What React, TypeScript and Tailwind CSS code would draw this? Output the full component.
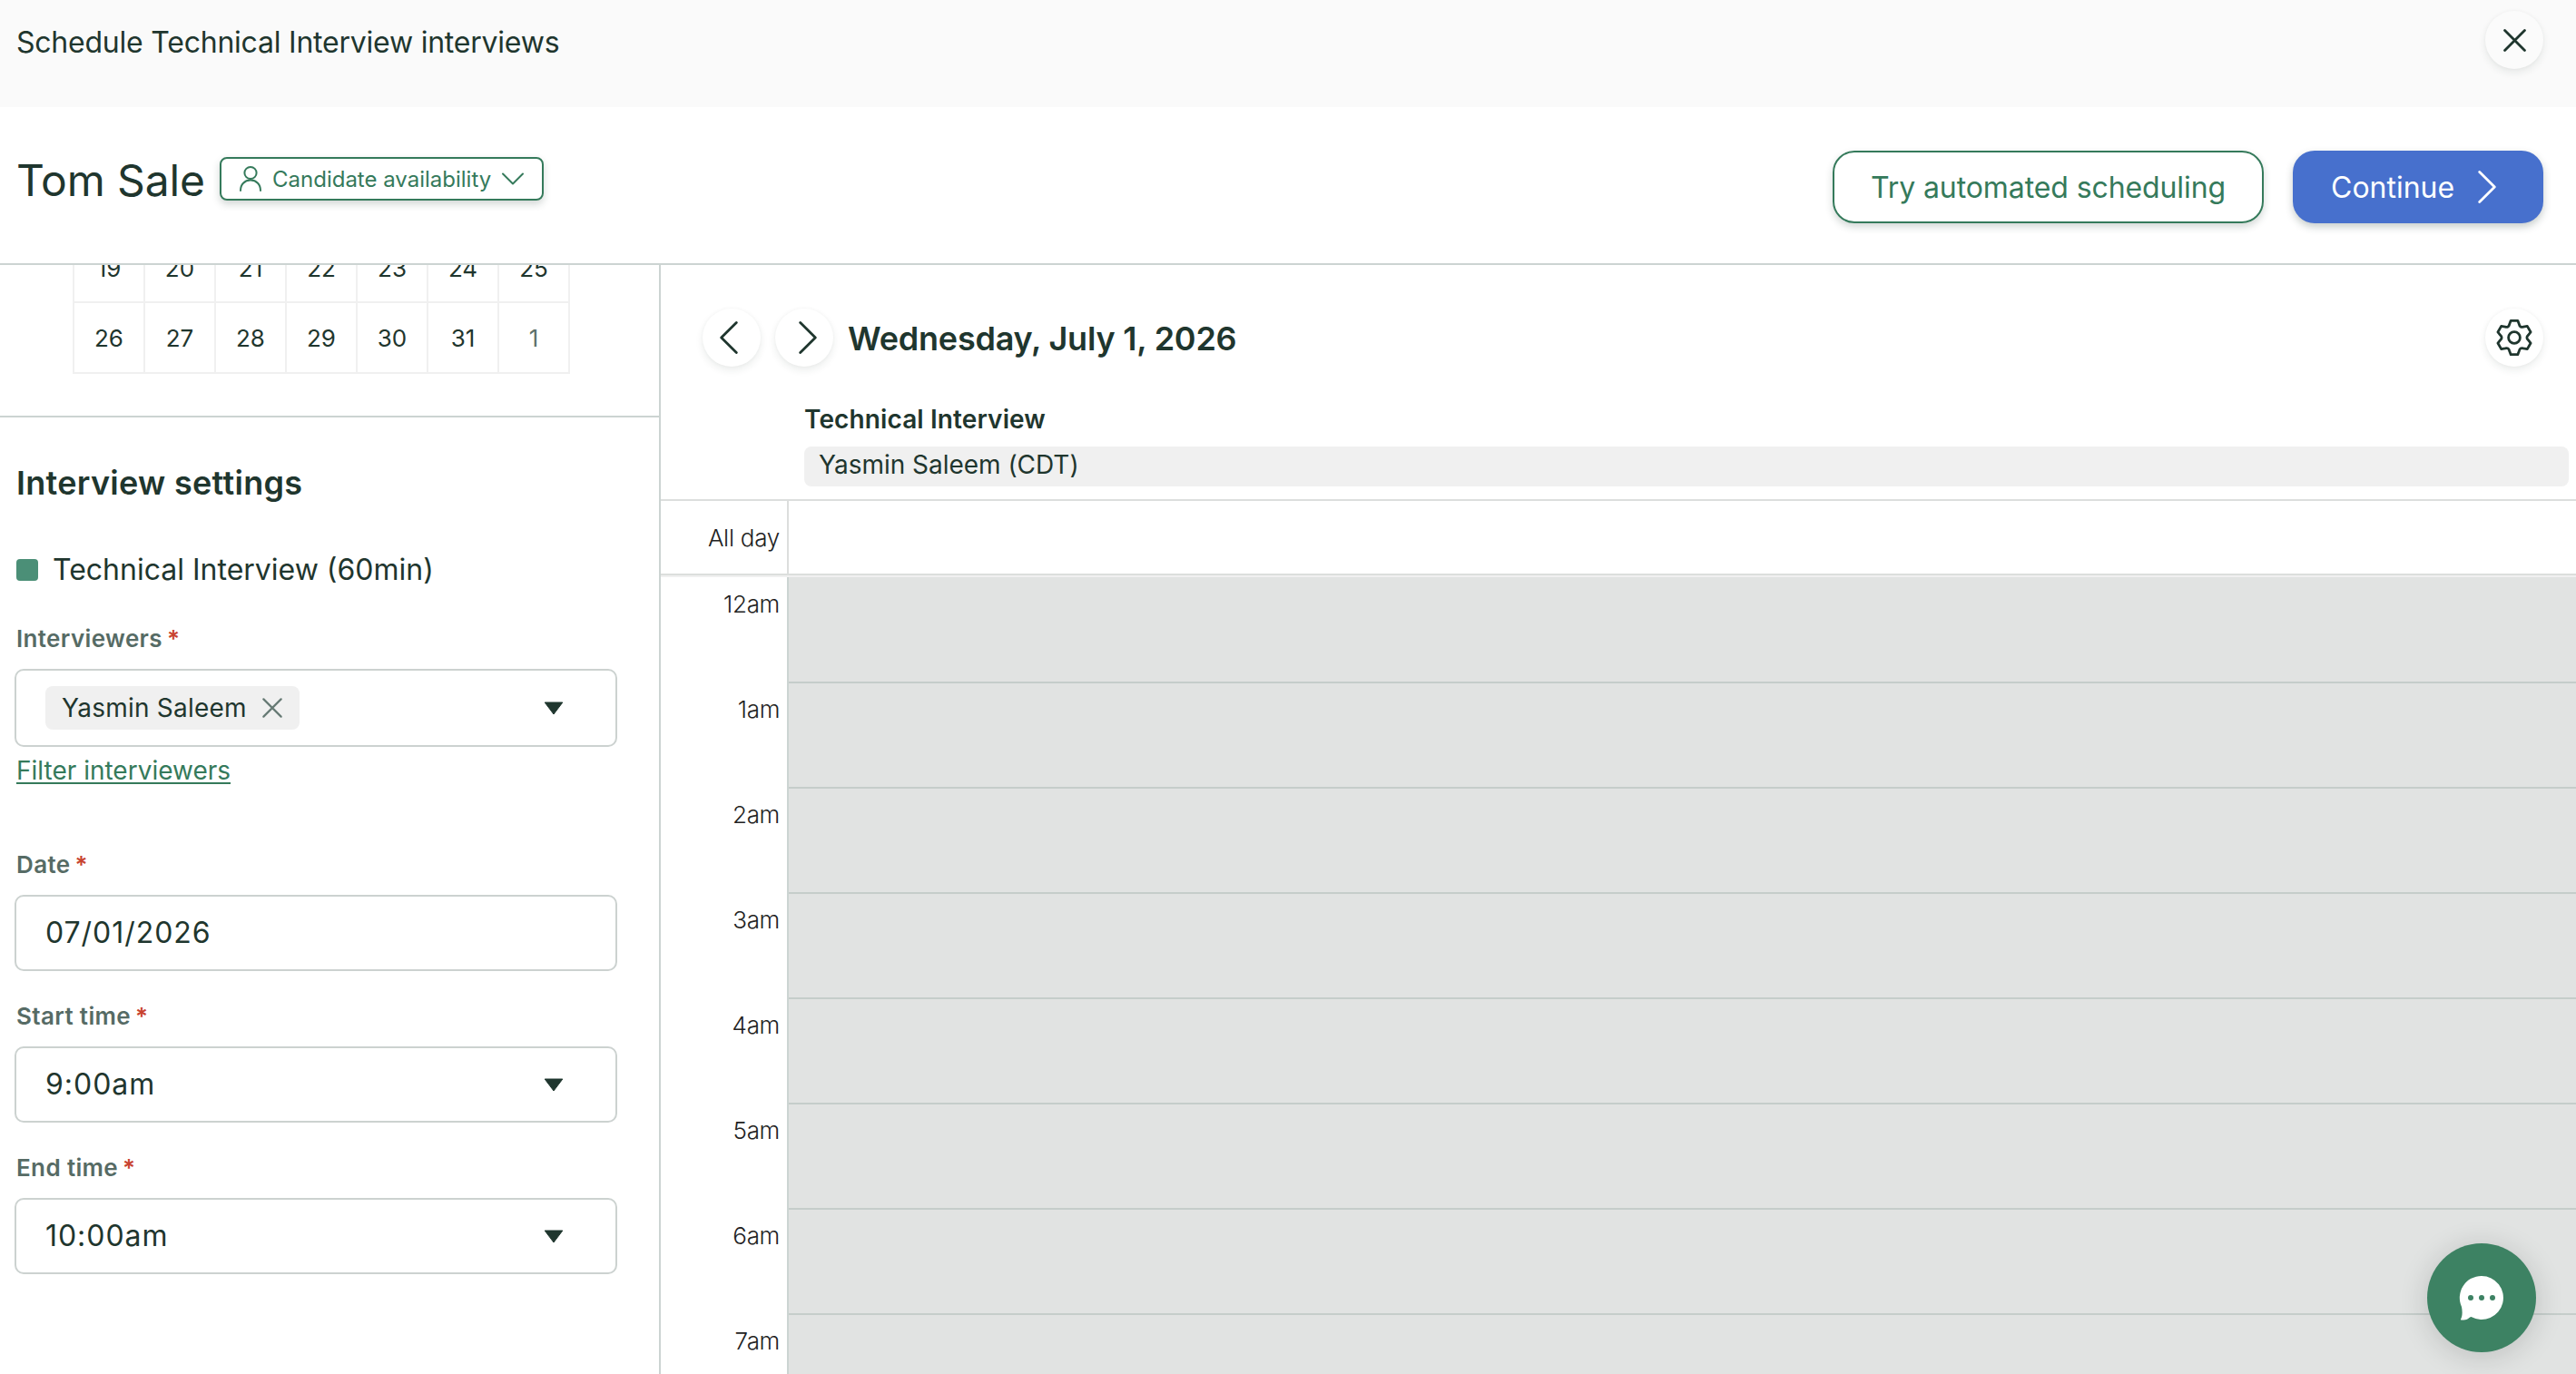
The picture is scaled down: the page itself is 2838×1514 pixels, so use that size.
import type { ReactNode } from "react";

const weeks = [
  [19, 20, 21, 22, 23, 24, 25],
  [26, 27, 28, 29, 30, 31, 1],
];

const hours = ["12am", "1am", "2am", "3am", "4am", "5am", "6am", "7am"];

// six-tooth outline around the origin
function gearPath() {
  const at = (deg: number, r: number) => {
    const a = (deg * Math.PI) / 180;
    return `${(r * Math.sin(a)).toFixed(2)} ${(-r * Math.cos(a)).toFixed(2)}`;
  };
  let d = "";
  for (let k = 0; k < 6; k++) {
    const t = k * 60;
    d += `${k === 0 ? "M" : "L"}${at(t - 11.5, 19.1)} L${at(t + 11.5, 19.1)} L${at(t + 20, 15.6)} Q${at(t + 30, 12.4)} ${at(t + 40, 15.6)} `;
  }
  return d + "Z";
}

function GearIcon() {
  return (
    <svg width="44" height="44" viewBox="-22 -22 44 44" fill="none" stroke="currentColor" strokeWidth="2.8" strokeLinejoin="round">
      <path d={gearPath()} />
      <circle r="6.4" />
    </svg>
  );
}

function PersonIcon() {
  return (
    <svg width="26" height="30" viewBox="0 0 26 30" fill="none" stroke="currentColor" strokeWidth="2" strokeLinecap="round">
      <circle cx="13" cy="8.5" r="6.6" />
      <path d="M2 28C2 21 6.5 16.6 13 16.6S24 21 24 28" />
    </svg>
  );
}

function CrossIcon({ size, stroke }: { size: number; stroke: number }) {
  return (
    <svg width={size} height={size} viewBox="0 0 24 24" fill="none" stroke="currentColor" strokeWidth={stroke} strokeLinecap="round">
      <path d="M1.5 1.5 22.5 22.5M22.5 1.5 1.5 22.5" />
    </svg>
  );
}

function ChevronIcon({ left = false }: { left?: boolean }) {
  return (
    <svg width="20" height="36" viewBox="0 0 20 36" fill="none" stroke="currentColor" strokeWidth="2.8" strokeLinecap="round" strokeLinejoin="round">
      <path d={left ? "M18.3 1.5 1.7 18 18.3 34.5" : "M1.7 1.5 18.3 18 1.7 34.5"} />
    </svg>
  );
}

function RoundButton({ label, className = "", children }: { label: string; className?: string; children: ReactNode }) {
  return (
    <button aria-label={label} className={`size-16 shrink-0 rounded-full flex items-center justify-center shadow-[0_4px_8px_rgba(31,54,46,0.09),0_0_4px_rgba(31,54,46,0.03)] ${className}`}>
      {children}
    </button>
  );
}

function Label({ children }: { children: ReactNode }) {
  return (
    <div className="pl-[18px] text-[26px] leading-9 font-semibold tracking-[0.014em] text-[#566b65]">
      {children} <span className="-ml-0.5 text-[#c8432f]">*</span>
    </div>
  );
}

function Field({ caret = false, className = "h-[84px]", children }: { caret?: boolean; className?: string; children: ReactNode }) {
  return (
    <div className={`ml-4 mt-[15px] w-[664px] rounded-[10px] border-2 border-[#ccd2d0] pl-8 pr-[57px] flex items-center justify-between text-[32px] ${className}`}>
      {children}
      {caret && (
        <svg width="22" height="15" viewBox="0 0 22 15" fill="currentColor" stroke="currentColor" strokeLinejoin="round">
          <path d="M1.2 1h19.6L11 14Z" />
        </svg>
      )}
    </div>
  );
}

function Sidebar() {
  return (
    <aside className="w-[728px] shrink-0 border-r-2 border-[#ccd4d2]">
      <div className="pl-20 pb-[46px] border-b-2 border-[#ccd4d2]">
        {weeks.map((week, i) => (
          <div key={i} className={`flex w-[548px] border-l-2 border-[#f0f0f0] overflow-hidden ${i === 0 ? "h-[42px]" : "h-[78px]"}`}>
            {week.map((day) => (
              <div
                key={day}
                className={`w-[78px] border-r-2 border-b-2 border-[#f0f0f0] flex justify-center text-[26px] ${day === 1 ? "text-[#5d716b]" : ""}`}
              >
                <span className={i === 0 ? "-mt-4 leading-10" : "leading-[77px]"}>{day}</span>
              </div>
            ))}
          </div>
        ))}
      </div>

      <h2 className="mt-12 pl-[18px] text-4xl leading-[48px] font-semibold tracking-[0.008em]">Interview settings</h2>

      <div className="mt-[52px] ml-[18px] flex items-center gap-4 text-[32px] leading-10">
        <span className="size-6 rounded bg-[#4b8f77]" />
        Technical Interview (60min)
      </div>

      <div className="mt-[38px]">
        <Label>Interviewers</Label>
        <Field caret className="h-[86px]">
          <span className="h-12 rounded-lg bg-[#f0f0f0] pl-[18px] pr-[19px] flex items-center gap-[17px] text-[28px] tracking-[0.008em]">
            Yasmin Saleem
            <span className="text-[#667a74]"><CrossIcon size={22} stroke={2.4} /></span>
          </span>
        </Field>
        <a className="mt-2 ml-[18px] inline-block text-[28px] leading-9 text-[#357a5b] underline decoration-2 underline-offset-[3px]">Filter interviewers</a>
      </div>

      <div className="mt-[68px]">
        <Label>Date</Label>
        <Field><span className="tracking-[0.03em]">07/01/2026</span></Field>
      </div>
      <div className="mt-8">
        <Label>Start time</Label>
        <Field caret><span className="tracking-[0.03em]">9:00am</span></Field>
      </div>
      <div className="mt-8">
        <Label>End time</Label>
        <Field caret><span className="tracking-[0.03em]">10:00am</span></Field>
      </div>
    </aside>
  );
}

function DayView() {
  return (
    <section className="flex-1 min-w-0 flex flex-col overflow-hidden">
      <div className="pt-12 pl-[46px] pr-9 flex items-center">
        <RoundButton label="Previous day" className="bg-white pr-[7px]"><ChevronIcon left /></RoundButton>
        <RoundButton label="Next day" className="ml-4 bg-white pl-[7px]"><ChevronIcon /></RoundButton>
        <h2 className="ml-4 flex-1 pt-0.5 text-4xl font-semibold tracking-[-0.006em]">Wednesday, July 1, 2026</h2>
        <RoundButton label="Settings" className="bg-white"><GearIcon /></RoundButton>
      </div>

      <div className="mt-10 pl-[158px] pr-2 pb-3.5 border-b-2 border-[#dcdedd]">
        <div className="text-[28px] leading-9 font-semibold tracking-[0.004em]">Technical Interview</div>
        <div className="mt-3 h-11 rounded-lg bg-[#f0f0f0] pl-4 text-[28px] leading-10 tracking-[-0.001em]">Yasmin Saleem (CDT)</div>
      </div>

      <div className="h-[82px] shrink-0 flex border-b-2 border-[#dcdedd] text-[#222]">
        <div className="w-[141px] border-r-2 border-[#dcdedd] pr-[8px] text-right text-[26px] leading-[81px] font-light tracking-[-0.01em]">All day</div>
      </div>
      <div className="h-0.5 shrink-0 bg-[#f0f0f0]" />

      <div className="flex-1 min-h-0 flex overflow-hidden">
        <div className="w-[141px] shrink-0 border-r-2 border-[#ccd4d2] pt-px">
          {hours.map((hour) => (
            <div key={hour} className="h-[116px] pt-[13px] pr-[8px] text-right text-[26px] leading-8 font-light tracking-[-0.012em] text-[#222]">{hour}</div>
          ))}
        </div>
        <div className="flex-1 bg-[#e1e3e2] pt-px">
          {hours.map((hour) => (
            <div key={hour} className="h-[116px] border-b-2 border-[#c5cdca]" />
          ))}
        </div>
      </div>
    </section>
  );
}

export default function App() {
  return (
    <div className="relative h-[1514px] w-[2838px] overflow-hidden flex flex-col bg-white text-[#1f362e] font-['Inter','Liberation_Sans',sans-serif]">
      <header className="h-[118px] shrink-0 bg-[#fafafa] pl-[18px] pr-9 pt-3 flex items-start justify-between">
        <h1 className="mt-[15px] text-[32px] leading-10 tracking-[-0.007em]">Schedule Technical Interview interviews</h1>
        <RoundButton label="Close" className="bg-[#fbfbfb]"><CrossIcon size={25} stroke={2.7} /></RoundButton>
      </header>

      <div className="h-[174px] shrink-0 border-b-2 border-[#ccd4d2] pl-[18px] pr-9 pt-12 flex items-start">
        <div className="w-[207px] whitespace-nowrap text-5xl leading-[56px] mt-[5px] tracking-[-0.003em]">Tom Sale</div>
        <button className="mt-[7px] ml-[17px] w-[357px] h-12 rounded-lg border-2 border-[#357a5b] pl-[19px] pr-[19px] flex items-center text-2xl text-[#357a5b] shadow-[0_4px_8px_rgba(31,54,46,0.2)]">
          <PersonIcon />
          <span className="ml-[11px] pt-px flex-1 text-left whitespace-nowrap">Candidate availability</span>
          <svg width="26" height="14" viewBox="0 0 26 14" fill="none" stroke="currentColor" strokeWidth="2" strokeLinecap="round" strokeLinejoin="round">
            <path d="M2 1.5 13 12.5 24 1.5" />
          </svg>
        </button>
        <div className="ml-auto flex gap-8">
          <button className="w-[475px] h-20 rounded-3xl border-2 border-[#357a5b] pt-0.5 text-[32px] tracking-[-0.003em] text-[#357a5b] shadow-[0_4px_8px_rgba(31,54,46,0.2)]">
            Try automated scheduling
          </button>
          <button className="w-[276px] h-20 rounded-3xl bg-[#4770cd] pl-[42px] flex items-center gap-[26px] text-[32px] text-white shadow-[0_4px_8px_rgba(31,54,46,0.25)]">
            <span className="pt-0.5">Continue</span>
            <ChevronIcon />
          </button>
        </div>
      </div>

      <main className="flex-1 min-h-0 flex overflow-hidden">
        <Sidebar />
        <DayView />
      </main>

      <button aria-label="Chat" className="absolute right-11 bottom-6 size-[120px] rounded-full bg-[#3d8263] flex items-center justify-center shadow-[0_4px_32px_rgba(0,0,0,0.16)]">
        <svg width="50" height="50" viewBox="0 0 50 50">
          <path fill="#fff" d="M25 1a24 24 0 1 1-11.500 45.100c-2.500.6-3.500 3.400-8 3.400-2 0-3.800.2-3.500-.8C4.200 45 3.800 39 3 35A24 24 0 0 1 25 1Z" />
          <g fill="#3d8263">
            <circle cx="13" cy="25" r="3" />
            <circle cx="25" cy="25" r="3" />
            <circle cx="37" cy="25" r="3" />
          </g>
        </svg>
      </button>
    </div>
  );
}
